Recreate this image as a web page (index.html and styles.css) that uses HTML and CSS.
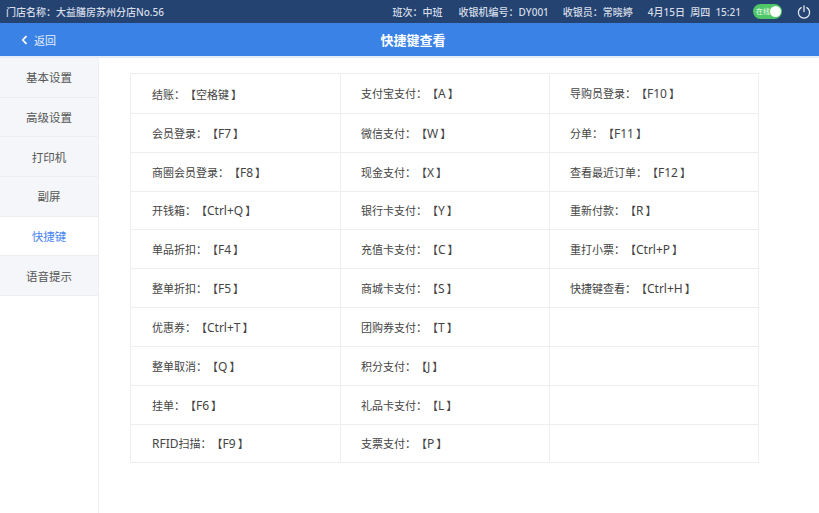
FILE: index.html
```html
<!DOCTYPE html>
<html lang="zh-CN">
<head>
<meta charset="utf-8">
<title>快捷键查看</title>
<link rel="stylesheet" href="styles.css">
</head>
<body>
<div class="app">
  <header class="status">
    <div class="store">门店名称：大益膳房苏州分店No.56</div>
    <div class="status-right">
      <span class="s1">班次：中班</span>
      <span class="s2">收银机编号：DY001</span>
      <span class="s3">收银员：常晓婷</span>
      <span class="s4">4月15日&nbsp;&nbsp;周四&nbsp;&nbsp;15:21</span>
      <span class="toggle"><span class="toggle-text">在线</span><span class="knob"></span></span>
      <svg class="power" width="14" height="14" viewBox="0 0 14 14" fill="none" stroke="#e4e9f1" stroke-width="1.3" stroke-linecap="round"><path d="M4.2 2.6A5.6 5.6 0 1 0 9.8 2.6"/><path d="M7 0.8V6.6"/></svg>
    </div>
  </header>
  <div class="nav">
    <div class="back"><svg width="7" height="10" viewBox="0 0 7 10" fill="none" stroke="#fff" stroke-width="1.8"><path d="M5.5 1L1.8 5l3.7 4"/></svg><span>返回</span></div>
    <div class="title">快捷键查看</div>
  </div>
  <div class="main">
    <aside class="side">
      <div class="side-item">基本设置</div>
      <div class="side-item">高级设置</div>
      <div class="side-item">打印机</div>
      <div class="side-item">副屏</div>
      <div class="side-item active">快捷键</div>
      <div class="side-item">语音提示</div>
    </aside>
    <section class="content">
      <div class="table">
        <div class="cell"><span>结账：【<span class="k">空格键</span>】</span></div><div class="cell"><span>支付宝支付：【<span class="k lat">A</span>】</span></div><div class="cell"><span>导购员登录：【<span class="k lat">F10</span>】</span></div>
        <div class="cell"><span>会员登录：【<span class="k lat">F7</span>】</span></div><div class="cell"><span>微信支付：【<span class="k lat">W</span>】</span></div><div class="cell"><span>分单：【<span class="k lat">F11</span>】</span></div>
        <div class="cell"><span>商圈会员登录：【<span class="k lat">F8</span>】</span></div><div class="cell"><span>现金支付：【<span class="k lat">X</span>】</span></div><div class="cell"><span>查看最近订单：【<span class="k lat">F12</span>】</span></div>
        <div class="cell"><span>开钱箱：【<span class="k lat">Ctrl+Q</span>】</span></div><div class="cell"><span>银行卡支付：【<span class="k lat">Y</span>】</span></div><div class="cell"><span>重新付款：【<span class="k lat">R</span>】</span></div>
        <div class="cell"><span>单品折扣：【<span class="k lat">F4</span>】</span></div><div class="cell"><span>充值卡支付：【<span class="k lat">C</span>】</span></div><div class="cell"><span>重打小票：【<span class="k lat">Ctrl+P</span>】</span></div>
        <div class="cell"><span>整单折扣：【<span class="k lat">F5</span>】</span></div><div class="cell"><span>商城卡支付：【<span class="k lat">S</span>】</span></div><div class="cell"><span>快捷键查看：【<span class="k lat">Ctrl+H</span>】</span></div>
        <div class="cell"><span>优惠券：【<span class="k lat">Ctrl+T</span>】</span></div><div class="cell"><span>团购券支付：【<span class="k lat">T</span>】</span></div><div class="cell"></div>
        <div class="cell"><span>整单取消：【<span class="k lat">Q</span>】</span></div><div class="cell"><span>积分支付：【<span class="k lat">J</span>】</span></div><div class="cell"></div>
        <div class="cell"><span>挂单：【<span class="k lat">F6</span>】</span></div><div class="cell"><span>礼品卡支付：【<span class="k lat">L</span>】</span></div><div class="cell"></div>
        <div class="cell"><span><span class="lat">RFID</span>扫描：【<span class="k lat">F9</span>】</span></div><div class="cell"><span>支票支付：【<span class="k lat">P</span>】</span></div><div class="cell"></div>
      </div>
    </section>
  </div>
</div>
</body>
</html>
```
FILE: styles.css
```css
* { box-sizing: border-box; }
html, body { margin: 0; padding: 0; }
body {
  width: 819px;
  height: 513px;
  overflow: hidden;
  background: #fff;
  font-family: "Noto Sans", "Noto Sans CJK SC", sans-serif;
  color: #444;
  text-spacing-trim: space-all;
}
.app { display: flex; flex-direction: column; height: 513px; }
.status {
  height: 23px;
  flex: none;
  background: #244370;
  color: #d6dde8;
  font-size: 10px;
  font-weight: 500;
  display: flex;
  align-items: center;
  justify-content: space-between;
  padding: 0 8px 0 6px;
  white-space: nowrap;
}
.status-right { display: flex; align-items: center; }
.s1 { margin-right: 16px; }
.s2 { margin-right: 14px; }
.s3 { margin-right: 15px; }
.s4 { margin-right: 12px; }
.toggle {
  width: 29px;
  height: 15px;
  border-radius: 8px;
  background: #4fc667;
  display: flex;
  align-items: center;
  justify-content: space-between;
  padding: 0 1px 0 3px;
  margin-right: 15px;
}
.toggle-text { font-size: 7px; color: #d9f3df; line-height: 1; }
.knob { width: 11px; height: 11px; border-radius: 50%; background: #fff; }
.power { display: block; }
.nav {
  height: 33px;
  flex: none;
  background: #3b82e6;
  color: #fff;
  position: relative;
  display: flex;
  align-items: center;
  justify-content: center;
  padding-left: 7px;
}
.back {
  position: absolute;
  left: 21px;
  top: 0;
  height: 33px;
  display: flex;
  align-items: center;
  gap: 6px;
  font-size: 11px;
  color: #e6effc;
}
.title { font-size: 13px; font-weight: 700; }
.main { flex: 1; display: flex; min-height: 0; border-top: 2px solid #e4ecf8; }
.side {
  width: 99px;
  flex: none;
  border-right: 1px solid #eef0f3;
  display: flex;
  flex-direction: column;
}
.side-item {
  height: 39.7px;
  flex: none;
  background: #f4f6fa;
  border-bottom: 1px solid #eceef2;
  font-size: 11.5px;
  color: #555;
  display: flex;
  align-items: center;
  justify-content: center;
}
.side-item.active { background: #fff; color: #4a86f0; }
.content { flex: 1; padding: 15px 60px 0 31px; }
.table {
  display: grid;
  grid-template-columns: 210px 209px 209px;
  grid-template-rows: 40px 39px 39px 38px 39px 39px 39px 39px 39px 38px;
  width: 629px;
  border-top: 1px solid #eeeeee;
  border-left: 1px solid #eeeeee;
}
.cell {
  border-right: 1px solid #eeeeee;
  border-bottom: 1px solid #eeeeee;
  padding-left: 21px;
  font-size: 11px;
  color: #444;
  display: flex;
  align-items: center;
  white-space: nowrap;
}
.cell:not(:nth-child(3n+1)) { padding-left: 20px; }
.lat { font-size: 12px; }
.k { margin-right: 2px; }
```
